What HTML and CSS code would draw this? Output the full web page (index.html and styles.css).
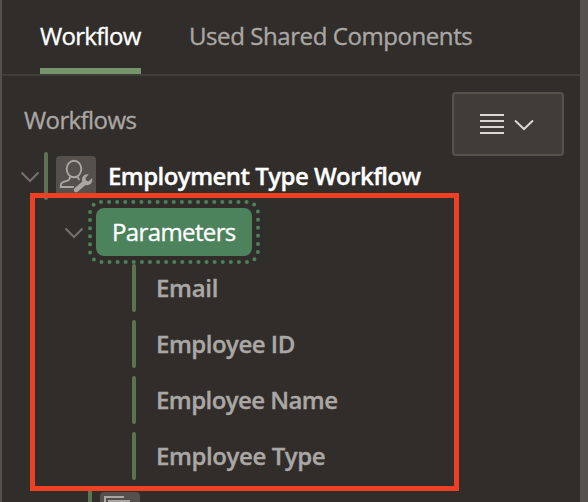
FILE: index.html
```html
<!DOCTYPE html>
<html lang="en">
<head>
<meta charset="utf-8">
<title>Workflow</title>
<link rel="stylesheet" href="styles.css">
</head>
<body>
<main class="panel">
  <nav class="tabs">
    <a class="tab active"><span class="t-workflow">Workflow</span></a>
    <a class="tab"><span class="t-shared">Used Shared Components</span></a>
  </nav>
  <header class="toolbar">
    <h2 class="heading">Workflows</h2>
    <button class="menu-button" aria-label="Options">
      <svg width="58" height="24" viewBox="0 0 58 24" fill="none" stroke="#d9d7d3" stroke-width="2"><path d="M1 3h24M1 9h24M1 15h24M1 21h24"/><path d="M36 8.500l9 8.500 9-8.500"/></svg>
    </button>
  </header>
  <div class="tree">
    <div class="row root">
      <svg class="chevron" width="20" height="12" viewBox="0 0 20 12"><path d="M1.500 1.500l8.500 8.500 8.500-8.500"/></svg>
      <i class="bar"></i>
      <span class="icon"><svg width="40" height="40" viewBox="0 0 40 40" fill="none" stroke="#aaa6a1" stroke-width="1.900"><ellipse cx="18" cy="13" rx="7.300" ry="8.200"/><path d="M14 20.500c0 2.500-.5 3.500-2.500 4.200l-4.500 1.500c-1.500.600-2.200 1.500-2.200 3v1.800h13M22 20.500c0 1.800.3 2.800 1.500 3.500"/><path fill="#aaa6a1" stroke="none" d="M18.500 32.200l7.800-6.700c-1.200-4.500 2-8.200 6.400-7.200l-3.200 3.700.7 2.700 2.600.500 3.200-3.200c1.200 4.500-2 8-6.400 7l-8 6.800c-2.200 1.700-5-1.200-3.100-3.600z"/></svg></span>
      <span class="label title">Employment Type Workflow</span>
    </div>
    <div class="row branch">
      <svg class="chevron" width="20" height="12" viewBox="0 0 20 12"><path d="M1.500 1.500l8.500 8.500 8.500-8.500"/></svg>
      <span class="selected"><span class="t-parameters">Parameters</span>
        <svg class="focus" width="172" height="64" viewBox="0 0 172 64"><rect x="2" y="2" width="168" height="60" rx="11" pathLength="432"/></svg>
      </span>
    </div>
    <div class="row leaf"><i class="bar"></i><span class="label t-email">Email</span></div>
    <div class="row leaf"><i class="bar"></i><span class="label t-id">Employee ID</span></div>
    <div class="row leaf"><i class="bar"></i><span class="label t-name">Employee Name</span></div>
    <div class="row leaf"><i class="bar"></i><span class="label t-type">Employee Type</span></div>
    <div class="row next"><i class="bar"></i><span class="icon"><svg width="40" height="40" viewBox="0 0 40 40" fill="none" stroke="#aaa6a1" stroke-width="2"><path d="M5 28V5h19M9 32V9h21"/></svg></span></div>
  </div>
  <div class="highlight"></div>
</main>
</body>
</html>
```
FILE: styles.css
```css
* { box-sizing: border-box; }
body { margin: 0; background: #312d2a; }
.panel {
  position: relative;
  width: 588px;
  height: 502px;
  overflow: hidden;
  border-left: 2px solid #55504c;
  border-right: 8px solid #55504c;
  background: #312d2a;
  color: #aaa7a4;
  font: 24px/32px "Open Sans", "Noto Sans", sans-serif;
  -webkit-text-stroke: .35px currentColor;
  white-space: nowrap;
}
.tabs {
  display: flex;
  gap: 48px;
  height: 76px;
  padding-left: 38px;
  border-bottom: 2px solid #413d39;
}
.tab { height: 74px; padding-top: 20px; }
.tab.active { width: 101px; border-bottom: 6px solid #759469; color: #fff; }
.toolbar {
  display: flex;
  justify-content: space-between;
  height: 72px;
  padding: 16px 16px 0 22px;
}
.heading { margin: 12px 0 0; font: inherit; letter-spacing: -.6px; }
.menu-button {
  display: flex;
  justify-content: center;
  align-items: center;
  width: 112px;
  height: 64px;
  padding: 0;
  border: 2px solid #55514c;
  border-radius: 4px;
  background: #403c37;
}
.row { display: flex; align-items: center; height: 56px; }
.bar { flex: none; width: 4px; height: 48px; border-radius: 2px; background: #5d7354; }
.chevron { flex: none; fill: none; stroke: #73706c; stroke-width: 2.2; }
.icon { flex: none; width: 40px; height: 40px; border-radius: 4px; background: #55504c; }
.icon svg { display: block; }
.root { padding-left: 18px; }
.root .bar { margin-left: 4px; }
.root .icon { margin: 0 12px 0 8px; }
.branch { padding-left: 62px; }
.branch .chevron { position: relative; top: 1px; }
.root .chevron { position: relative; top: 1px; }
.leaf { padding-left: 130px; }
.leaf .bar { margin-right: 20px; }
.next { padding-left: 86px; }
.next .icon { margin-left: 8px; }
.label { font-weight: 600; }
.title { color: #fff; }
.selected {
  position: relative;
  width: 156px;
  height: 48px;
  margin-left: 12px;
  padding: 8px 0 0 16px;
  border-radius: 8px;
  background: #4c825c;
  color: #fff;
}
.focus { position: absolute; left: -8px; top: -8px; fill: none; stroke: #4c825c; stroke-width: 4; stroke-linecap: round; stroke-dasharray: 0 8; }
.t-workflow { letter-spacing: -.7px; }
.t-shared { letter-spacing: -.42px; }
.t-parameters { letter-spacing: -.62px; }
.title { letter-spacing: -.54px; }
.t-email { letter-spacing: -.3px; }
.t-id { letter-spacing: -.5px; }
.t-name { letter-spacing: -.56px; }
.t-type { letter-spacing: -.4px; }
.highlight {
  position: absolute;
  left: 28px;
  top: 193px;
  width: 429px;
  height: 298px;
  border: 5px solid #ee4023;
}
```
